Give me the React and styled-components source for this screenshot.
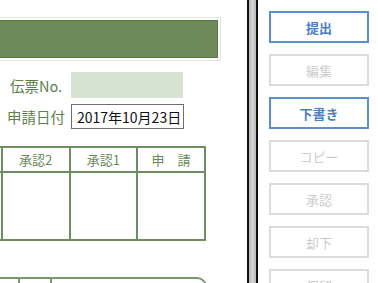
import React from 'react';
import styled, { createGlobalStyle } from 'styled-components';

const GlobalStyle = createGlobalStyle`
    html, body {
        margin: 0;
        padding: 0;
        background: #ffffff;
        overflow: hidden;
    }
    body {
        font-family: "Noto Sans CJK JP", "Noto Sans", sans-serif;
    }
`;

const Page = styled.div`
    display: flex;
    width: 378px;
    height: 283px;
    overflow: hidden;
`;

const LeftPane = styled.div`
    width: 247px;
    flex-shrink: 0;
    overflow: hidden;
`;

const Inner = styled.div`
    margin-left: -68px;
    padding-top: 17px;
    display: flex;
    flex-direction: column;
`;

const TitleFrame = styled.div`
    margin-left: 20px;
    width: 269px;
    height: 44px;
    box-sizing: border-box;
    border: 1px solid #dfe7db;
    padding: 2px;
`;

const TitleBar = styled.div`
    height: 100%;
    box-sizing: border-box;
    background: #6b8a58;
    border: 1px solid #587a46;
`;

const Form = styled.div`
    display: flex;
    flex-direction: column;
    gap: 6px;
    margin-top: 11px;
    margin-left: 72px;
`;

const FormRow = styled.div`
    display: flex;
    align-items: center;
    gap: 3px;
`;

const Label = styled.span`
    width: 64px;
    text-align: center;
    font-size: 14.5px;
    color: #5e7f4c;
    white-space: nowrap;
`;

const Field = styled.div`
    box-sizing: border-box;
    width: ${p => p.$w}px;
    height: ${p => p.$h}px;
    background: ${p => (p.$filled ? '#d6e3d3' : '#ffffff')};
    border: ${p => (p.$filled ? 'none' : '1px solid #6e6e6e')};
    padding-left: 5px;
    display: flex;
    align-items: center;
    font-size: 14px;
    color: #111111;
    white-space: nowrap;
`;

const StampTable = styled.div`
    margin-top: 17px;
    margin-left: 1px;
    width: 273px;
    display: grid;
    grid-template-columns: repeat(4, 1fr);
    grid-template-rows: 25px 66px;
    border: 2px solid #6f8e5f;
    border-left: none;
    box-sizing: border-box;
`;

const HeadCell = styled.div`
    display: flex;
    align-items: center;
    justify-content: center;
    font-size: 13px;
    color: #6b8a58;
    border-left: 2px solid #6f8e5f;
    border-bottom: 2px solid #6f8e5f;
    white-space: pre;
`;

const StampCell = styled.div`
    border-left: 2px solid #6f8e5f;
`;

const DetailTable = styled.div`
    margin-top: 36px;
    margin-left: 32px;
    width: 243px;
    height: 40px;
    box-sizing: border-box;
    border-top: 2px solid #7b9a6b;
    border-right: 2px solid #7b9a6b;
    border-top-right-radius: 10px;
    display: grid;
    grid-template-columns: 56px 32px 1fr;
`;

const DetailCell = styled.div`
    border-right: ${p => (p.$last ? 'none' : '2px solid #7b9a6b')};
`;

const Separator = styled.div`
    width: 11px;
    flex-shrink: 0;
    box-sizing: border-box;
    border-left: 2px solid #111111;
    border-right: 2px solid #111111;
    background: linear-gradient(to right, #b8b8b8, #d4d4d4 50%, #b8b8b8);
`;

const SidePane = styled.div`
    display: flex;
    flex-direction: column;
    gap: 11px;
    padding: 11px 0 0 11px;
`;

const ActionButton = styled.button`
    width: 100px;
    height: 32px;
    flex-shrink: 0;
    box-sizing: border-box;
    background: #ffffff;
    border: 2px solid ${p => (p.disabled ? '#dcdcdc' : '#5a8fcf')};
    color: ${p => (p.disabled ? '#cdcdcd' : '#4b80c2')};
    font-family: "Noto Sans CJK JP", "Noto Sans", sans-serif;
    font-size: 13px;
    font-weight: ${p => (p.disabled ? 400 : 700)};
    padding: 0;
    cursor: pointer;
`;

const buttons = [
    { label: '提出', active: true },
    { label: '編集', active: false },
    { label: '下書き', active: true },
    { label: 'コピー', active: false },
    { label: '承認', active: false },
    { label: '却下', active: false },
    { label: '保留', active: false },
];

// first column lies off-screen to the left, its heading is not shown
const stampHeads = ['', '承認2', '承認1', '申　請'];

const App = () => {
    return (
        <>
            <GlobalStyle />
            <Page>
                <LeftPane>
                    <Inner>
                        <TitleFrame>
                            <TitleBar />
                        </TitleFrame>
                        <Form>
                            <FormRow>
                                <Label>伝票No.</Label>
                                <Field $w={112} $h={26} $filled />
                            </FormRow>
                            <FormRow>
                                <Label>申請日付</Label>
                                <Field $w={113} $h={25}>2017年10月23日</Field>
                            </FormRow>
                        </Form>
                        <StampTable>
                            {stampHeads.map((h, i) => (
                                <HeadCell key={i}>{h}</HeadCell>
                            ))}
                            {stampHeads.map((h, i) => (
                                <StampCell key={i} />
                            ))}
                        </StampTable>
                        <DetailTable>
                            <DetailCell />
                            <DetailCell />
                            <DetailCell $last />
                        </DetailTable>
                    </Inner>
                </LeftPane>
                <Separator />
                <SidePane>
                    {buttons.map(b => (
                        <ActionButton key={b.label} disabled={!b.active}>
                            {b.label}
                        </ActionButton>
                    ))}
                </SidePane>
            </Page>
        </>
    );
};

export default App;
